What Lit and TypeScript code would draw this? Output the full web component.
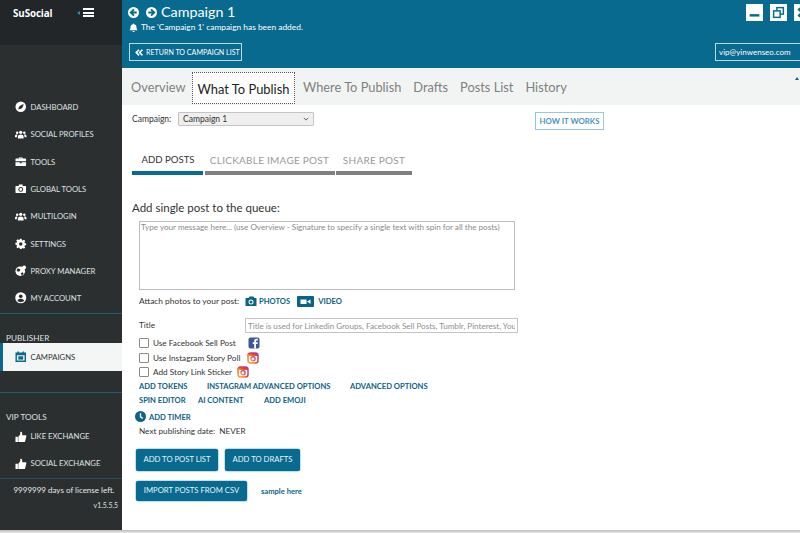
import { LitElement, html, css, svg } from "lit";
import { customElement } from "lit/decorators.js";

const ic = (body: unknown, vb = "0 0 24 24") => html`<svg class="ic" viewBox=${vb} fill="currentColor">${body}</svg>`;
const users = svg`<circle cx="12" cy="7" r="3.4"/><circle cx="4.5" cy="8" r="2.6"/><circle cx="19.5" cy="8" r="2.6"/><path d="M6 20v-4c0-3 3-4.500 6-4.500s6 1.500 6 4.500v4z"/><path d="M0 17v-2.500c0-2 2-3 4.500-3 .5 0 .8 0 .8 0C4.500 13 4 14.500 4 17zM24 17v-2.500c0-2-2-3-4.500-3-.5 0-.8 0-.8 0 .8 1.500 1.300 3 1.300 5.500z"/>`;
const dash = svg`<circle cx="12" cy="12" r="11"/><path d="M7 17c0-5 4-9 11-11-1 7-4 11-9 10.500L7 18z" fill="#2b2f30"/>`;
const box = svg`<path d="M8 5V3h8v2h6a1 1 0 0 1 1 1v5H1V6a1 1 0 0 1 1-1zm2 0h4V4.500h-4z"/><path d="M1 13h9v2h4v-2h9v7a1 1 0 0 1-1 1H2a1 1 0 0 1-1-1z"/>`;
const globe = svg`<path d="M8 6V3h8v3h6a1 1 0 0 1 1 1v13a1 1 0 0 1-1 1H2a1 1 0 0 1-1-1V7a1 1 0 0 1 1-1z"/><circle cx="12" cy="13.500" r="5" fill="#2b2f30"/><circle cx="12" cy="13.500" r="3"/>`;
const gear = svg`<path d="M10 1h4l.7 3.200 2 .9L19.500 3.300l2.800 2.800-1.800 2.800.9 2 3.100.7v4l-3.100.7-.9 2 1.800 2.800-2.800 2.800-2.800-1.800-2 .9L14 25h-4l-.7-3.200-2-.9-2.800 1.800-2.800-2.800 1.800-2.800-.9-2L-.5 14.400v-4l3.100-.7.9-2L1.700 4.900l2.800-2.800 2.800 1.800 2-.9z" transform="translate(1.200 .8) scale(.9)"/><circle cx="12" cy="12.500" r="3.600" fill="#2b2f30"/>`;
const proxy = svg`<circle cx="11" cy="13" r="10"/><path d="M6 7l5 2-1 4-4 1-3-3zM12 17l4-2 2 3-4 4z" fill="#2b2f30"/><circle cx="19" cy="5" r="4"/>`;
const acct = svg`<circle cx="12" cy="12" r="11.500"/><circle cx="12" cy="9" r="3.800" fill="#2b2f30"/><path d="M5 18.500c1-3.500 4-4.500 7-4.500s6 1 7 4.500c-2 2-4.500 3-7 3s-5-1-7-3z" fill="#2b2f30"/>`;
const cal = svg`<path d="M5 1h3v2h8V1h3v2h4v20H1V3h4zM4 9v11h16V9z"/><rect x="7" y="11" width="10" height="7"/>`;
const thumb = svg`<rect x="1" y="12" width="5" height="11"/><path d="M7 12l4-5V2c2-1 4 0 4 3v4h7c2 0 2 2 1.500 3L21 22c-.3.800-1 1-2 1H7z"/>`;
const insta = html`<svg class="brand" viewBox="0 0 24 24"><defs><linearGradient id="ig" x1="0" y1="1" x2="1" y2="0"><stop offset="0" stop-color="#f9b13a"/><stop offset=".5" stop-color="#e8432f"/><stop offset="1" stop-color="#a43bb8"/></linearGradient></defs><rect x="2" y="2" width="20" height="20" rx="5" fill="none" stroke="url(#ig)" stroke-width="3"/><rect x="2" y="2" width="20" height="6" fill="url(#ig)"/><circle cx="12" cy="13.500" r="4.300" fill="none" stroke="url(#ig)" stroke-width="2.600"/></svg>`;
const fb = html`<svg class="brand" viewBox="0 0 24 24"><rect x="1" y="1" width="22" height="22" rx="4" fill="#3b5998"/><path d="M16 23v-9h3l.5-3.500H16V8.500c0-1 .4-1.700 1.800-1.700h1.800V3.600c-.6 0-1.500-.2-2.700-.2-2.700 0-4.500 1.600-4.500 4.600v2.500H9.500V14h2.900v9z" fill="#fff"/></svg>`;

const nav: [unknown, string][] = [
  [dash, "DASHBOARD"], [users, "SOCIAL PROFILES"], [box, "TOOLS"], [globe, "GLOBAL TOOLS"],
  [users, "MULTILOGIN"], [gear, "SETTINGS"], [proxy, "PROXY MANAGER"], [acct, "MY ACCOUNT"],
];

@customElement("app-root")
export class AppRoot extends LitElement {
  static styles = css`
    :host { display: block; width: 800px; height: 533px; overflow: hidden; background: #fff; font-family: Lato, "Open Sans", sans-serif; color: #333; }
    * { box-sizing: border-box; }
    .app { display: flex; height: 530px; }
    .foot { height: 3px; background: linear-gradient(#bbb, #e8e8e8); }
    .ic { width: 15px; height: 15px; flex: none; }
    /* sidebar */
    .side { width: 122px; flex: none; background: #2b2f30; color: #dfe2e2; display: flex; flex-direction: column; font-size: 7.700px; }
    .brandbar { height: 45px; background: #232628; display: flex; align-items: flex-start; padding: 7px 0 0 13px; gap: 25px; color: #fff; }
    .logo { font-family: "Open Sans", sans-serif; font-weight: 700; font-size: 9.800px; letter-spacing: -.1px; line-height: 13px; }
    .burger { display: flex; align-items: center; gap: 3px; margin-top: 1px; }
    .burger i { display: block; width: 0; height: 0; border: 2px solid transparent; border-right: 3px solid #2b8db3; border-left: 0; }
    .burger b { display: block; width: 11px; height: 9px; border-top: 2px solid #fff; border-bottom: 2px solid #fff; position: relative; }
    .burger b::after { content: ""; position: absolute; left: 0; right: 0; top: 1.500px; height: 2px; background: #fff; }
    .navs { display: flex; flex-direction: column; padding-top: 48.500px; }
    .item { display: flex; align-items: center; gap: 4px; height: 27.300px; padding-left: 15px; white-space: nowrap; }
    .item .ic { width: 11.500px; height: 11.500px; color: #fff; }
    .hr { height: 1px; background: #1f5c75; margin-top: 1px; }
    .sect { font-size: 8.200px; padding-left: 6px; line-height: 12px; }
    .sect.p { margin-top: 18px; }
    .active { height: 28px; margin-top: -1px; background: #f4f6f6; color: #333; border-left: 3px solid #086a8e; padding-left: 12px; }
    .active .ic { color: #086a8e; }
    .sp { margin-top: 21px; }
    .sect.v { margin-top: 18px; }
    .vip { display: flex; flex-direction: column; margin-top: -1px; }
    .vip .ic { margin-top: 2px; }
    .hr2 { height: 1px; background: #274b5a; margin-top: 2px; }
    .lic { font-size: 8px; text-align: center; padding-top: 5px; color: #e6e8e8; line-height: 12px; padding-left: 6px; }
    .ver { font-size: 6.900px; text-align: right; padding: 3px 4px 0 0; line-height: 12px; }
    /* main */
    .main { flex: 1; display: flex; flex-direction: column; min-width: 0; overflow: hidden; }
    .head { height: 68px; flex: none; background: #086a8e; color: #fff; display: flex; flex-direction: column; padding: 2px 0 0 6px; }
    .row { display: flex; align-items: center; }
    .title { height: 20px; gap: 5px; margin-right: -11px; }
    .title .circ { width: 11px; height: 11px; flex: none; }
    .title .circ + .circ { margin-left: 2px; }
    .title .name { font-size: 14.300px; line-height: 20px; margin-left: -1px; }
    .grow { flex: 1; }
    .wbtn { width: 17px; height: 17px; flex: none; background: #fff; color: #086a8e; margin-left: 2px; display: flex; align-items: center; justify-content: center; }
    .wbtn svg { width: 13px; height: 13px; }
    .notice { font-size: 8.400px; gap: 3px; height: 12px; margin: -1px 0 0 1px; }
    .notice .ic { width: 9px; height: 9px; }
    .actions { margin-top: 10px; justify-content: space-between; padding-left: 1px; }
    .ret { display: flex; align-items: center; gap: 3px; height: 18px; width: 113px; padding: 0 0 0 4px; border: 1px solid #bcd8e2; font-size: 7.100px; white-space: nowrap; }
    .ret .ic { width: 9px; height: 9px; }
    .acct { height: 18px; width: 85px; border: 1px solid #bcd8e2; border-right: 0; font-size: 8px; display: flex; align-items: center; padding-left: 3px; white-space: nowrap; }
    .tabs { height: 37px; background: #f2f4f4; display: flex; align-items: flex-start; padding: 2px 0 0 9px; color: #808080; font-size: 12.800px; position: relative; flex: none; }
    .tab { line-height: 35px; height: 35px; margin-right: 12px; white-space: nowrap; }
    .tab:first-child { width: 53px; margin-right: 14px; }
    .tab.on { background: #fff; color: #222; border: 1px dotted #555; margin: 2px 8px 0 -6px; padding: 0; height: 32px; line-height: 33px; font-size: 12.900px; width: 103px; text-align: center; }
    .up { position: absolute; right: 1px; top: 9px; width: 0; height: 0; border: 2px solid transparent; border-bottom: 3px solid #086a8e; border-top: 0; }
    .content { flex: 1; padding-left: 10px; display: flex; flex-direction: column; font-size: 8.200px; }
    .camp { display: flex; align-items: flex-start; height: 46px; padding-top: 7px; position: relative; font-size: 8.500px; }
    .camp label { line-height: 14px; width: 46px; white-space: nowrap; }
    .select { width: 136px; height: 14px; background: #efefef; border: 1px solid #c4c4c4; border-radius: 1px; padding: 0 4px; display: flex; align-items: center; justify-content: space-between; }
    .select svg { width: 6px; height: 6px; }
    .how { margin-left: auto; margin-right: 196px; height: 18px; width: 69px; border: 1px solid #9cc4dc; color: #4d93bd; font-weight: 700; font-size: 7.800px; display: flex; align-items: center; justify-content: center; white-space: nowrap; }
    .sub { display: flex; gap: 1.500px; height: 30px; font-size: 10px; color: #9a9a9a; }
    .sub div { height: 24px; line-height: 18px; border-bottom: 4px solid #808080; text-align: center; white-space: nowrap; letter-spacing: .25px; }
    .sub .on { color: #333; border-bottom-color: #086a8e; width: 71px; letter-spacing: 0; font-size: 9.600px; padding-left: 1px; }
    .h { font-size: 11.500px; line-height: 14px; margin-top: 20px; color: #333; }
    textarea { display: block; width: 376px; height: 69px; margin: 6px 0 0 7px; border: 1px solid #bdbdbd; background: #fff; padding: 0 1px; font: inherit; font-size: 8.100px; line-height: 11px; resize: none; color: #777; }
    textarea::placeholder { color: #8a8a8a; opacity: 1; }
    .attach { display: flex; align-items: center; height: 14px; margin: 4px 0 0 7px; font-size: 8.400px; }
    .attach-label { width: 101px; white-space: nowrap; }
    .link { color: #0b6385; font-weight: 700; font-size: 7.600px; white-space: nowrap; }
    .attach .ic { color: #0b6385; }
    .cam { width: 12px; height: 12px; margin: 0 2px 0 5px; }
    .vid { width: 17px; height: 11px; margin: 0 4px 0 7px; }
    .titlerow { display: flex; align-items: flex-start; height: 17px; margin: 11px 0 0 7px; }
    .titlerow span { width: 106px; line-height: 12px; }
    .titlerow input { width: 273px; height: 15px; border: 1px solid #c4c4c4; padding: 0 2px; font: inherit; font-size: 8.100px; margin-top: -1px; }
    .titlerow input::placeholder { color: #8f8f8f; opacity: 1; }
    .check { display: flex; align-items: center; height: 14.500px; margin-left: 7px; white-space: nowrap; }
    .check i { display: block; width: 10px; height: 10px; border: 1px solid #8a8a8a; border-radius: 1px; margin-right: 4px; background: #fff; }
    .brand { width: 12px; height: 12px; flex: none; }
    .links { display: flex; height: 13.500px; align-items: center; margin-left: 7px; }
    .timer { display: flex; align-items: center; margin: 3px 0 0 3px; gap: 3px; height: 14px; }
    .timer svg { width: 11px; height: 11px; }
    .next { margin: 0 0 0 7px; line-height: 14px; }
    .btns { display: flex; align-items: center; margin: 11px 0 0 4px; }
    .btns + .btns { margin-top: 10px; }
    .btn { height: 22px; border-radius: 2px; background: #086a8e; color: #e8f2f5; font-size: 7.700px; display: flex; align-items: center; justify-content: center; white-space: nowrap; box-shadow: 0 0 0 .5px #7fc4dc; padding-bottom: 2px; }
    .btns + .btns .btn { height: 20px; }
  `;

  render() {
    return html`<div class="app">
      <aside class="side">
        <div class="brandbar"><span class="logo">SuSocial</span><span class="burger"><i></i><b></b></span></div>
        <div class="navs">${nav.map(([i, t]) => html`<div class="item">${ic(i)}<span>${t}</span></div>`)}</div>
        <div class="hr"></div>
        <div class="sect p">PUBLISHER</div>
        <div class="item active">${ic(cal)}<span>CAMPAIGNS</span></div>
        <div class="hr sp"></div>
        <div class="sect v">VIP TOOLS</div>
        <div class="vip">
          <div class="item">${ic(thumb)}<span>LIKE EXCHANGE</span></div>
          <div class="item">${ic(thumb)}<span>SOCIAL EXCHANGE</span></div>
        </div>
        <div class="hr2"></div>
        <div class="lic">9999999 days of license left.</div>
        <div class="ver">v1.5.5.5</div>
      </aside>
      <main class="main">
        <header class="head">
          <div class="row title">
            <svg class="circ" viewBox="0 0 24 24"><circle cx="12" cy="12" r="12" fill="#fff"/><path d="M13 5l-7 7 7 7M6 12h13" fill="none" stroke="#086a8e" stroke-width="4"/></svg>
            <svg class="circ" viewBox="0 0 24 24"><circle cx="12" cy="12" r="12" fill="#fff"/><path d="M11 5l7 7-7 7M18 12H5" fill="none" stroke="#086a8e" stroke-width="4"/></svg>
            <span class="name">Campaign 1</span>
            <span class="grow"></span>
            <span class="wbtn"><svg viewBox="0 0 16 16"><rect x="2" y="10" width="12" height="3" fill="currentColor"/></svg></span>
            <span class="wbtn"><svg viewBox="0 0 16 16" fill="none" stroke="currentColor" stroke-width="1.800"><rect x="6" y="2" width="8" height="8"/><rect x="2" y="6" width="8" height="8" fill="#fff"/></svg></span>
            <span class="wbtn"><svg viewBox="0 0 16 16" fill="none" stroke="currentColor" stroke-width="3.400"><path d="M3 3l10 10M13 3L3 13"/></svg></span>
          </div>
          <div class="row notice">${ic(svg`<path d="M12 1c1 0 2 .8 2 2 4 1 6 4 6 8 0 4 1 6 3 8H1c2-2 3-4 3-8 0-4 2-7 6-8 0-1.200 1-2 2-2zM9 21h6c0 2-1.500 3-3 3s-3-1-3-3z"/>`)}<span>The 'Campaign 1' campaign has been added.</span></div>
          <div class="row actions">
            <div class="ret">${ic(svg`<path d="M12 3L3 12l9 9 3-3-6-6 6-6zM21 3l-9 9 9 9 3-3-6-6 6-6z"/>`)}<span>RETURN TO CAMPAIGN LIST</span></div>
            <div class="acct"><span>vip@yinwenseo.com</span></div>
          </div>
        </header>
        <nav class="tabs">
          <span class="tab">Overview</span><span class="tab on">What To Publish</span><span class="tab">Where To Publish</span><span class="tab">Drafts</span><span class="tab">Posts List</span><span class="tab">History</span><i class="up"></i>
        </nav>
        <section class="content">
          <div class="camp"><label>Campaign:</label>
            <div class="select"><span>Campaign 1</span><svg viewBox="0 0 8 8"><path d="M1 2.500l3 3 3-3" fill="none" stroke="#555" stroke-width="1.200"/></svg></div>
            <div class="how">HOW IT WORKS</div></div>
          <div class="sub"><div class="on">ADD POSTS</div><div style="width:130px">CLICKABLE IMAGE POST</div><div style="width:76px">SHARE POST</div></div>
          <div class="h">Add single post to the queue:</div>
          <textarea placeholder="Type your message here... (use Overview - Signature to specify a single text with spin for all the posts)"></textarea>
          <div class="attach"><span class="attach-label">Attach photos to your post:</span>
            <svg class="ic cam" viewBox="0 0 24 24" fill="currentColor"><path d="M2 6h5l2-3h8l2 3h3a1 1 0 0 1 1 1v14a1 1 0 0 1-1 1H2a1 1 0 0 1-1-1V7a1 1 0 0 1 1-1z"/><circle cx="12" cy="14" r="5" fill="#fff"/><circle cx="12" cy="14" r="3"/></svg>
            <span class="link">PHOTOS</span>
            <svg class="ic vid" viewBox="0 0 34 22"><rect width="34" height="22" rx="2" fill="#0b6385"/><rect x="7" y="7" width="12" height="9" fill="#fff"/><path d="M20 11l7-4v9z" fill="#fff"/></svg>
            <span class="link">VIDEO</span></div>
          <div class="titlerow"><span>Title</span><input placeholder="Title is used for Linkedin Groups, Facebook Sell Posts, Tumblr, Pinterest, YouTube" /></div>
          <div class="check"><i></i><span style="width:95px">Use Facebook Sell Post</span>${fb}</div>
          <div class="check"><i></i><span style="width:94px">Use Instagram Story Poll</span>${insta}</div>
          <div class="check"><i></i><span style="width:84px">Add Story Link Sticker</span>${insta}</div>
          <div class="links"><span class="link" style="width:68px">ADD TOKENS</span><span class="link" style="width:143px">INSTAGRAM ADVANCED OPTIONS</span><span class="link">ADVANCED OPTIONS</span></div>
          <div class="links"><span class="link" style="width:59px">SPIN EDITOR</span><span class="link" style="width:66px">AI CONTENT</span><span class="link">ADD EMOJI</span></div>
          <div class="timer"><svg viewBox="0 0 24 24"><circle cx="12" cy="12" r="12" fill="#0b6385"/><path d="M12 5v8l5 3" fill="none" stroke="#fff" stroke-width="3"/></svg><span class="link">ADD TIMER</span></div>
          <div class="next">Next publishing date:&nbsp; NEVER</div>
          <div class="btns"><div class="btn" style="width:82px;margin-right:7px">ADD TO POST LIST</div><div class="btn" style="width:75px">ADD TO DRAFTS</div></div>
          <div class="btns"><div class="btn" style="width:111px;margin-right:14px">IMPORT POSTS FROM CSV</div><span class="link">sample here</span></div>
        </section>
      </main>
    </div><div class="foot"></div>`;
  }
}
